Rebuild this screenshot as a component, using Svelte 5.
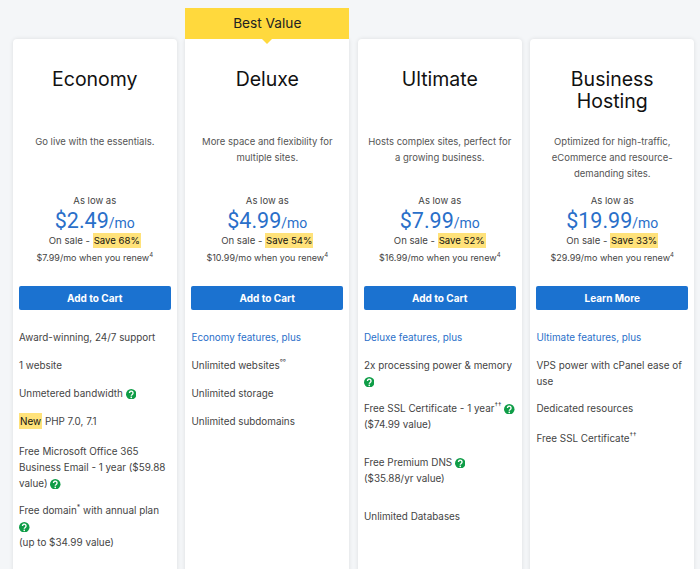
<script>
	const plans = [
		{
			name: ['Economy'],
			desc: ['Go live with the essentials.'],
			price: '$2.49',
			save: 'Save 68%',
			renew: '$7.99/mo',
			cta: 'Add to Cart',
			features: [
				{ parts: [{ t: 'Award-winning, 24/7 support' }] },
				{ parts: [{ t: '1 website' }] },
				{ parts: [{ t: 'Unmetered bandwidth ' }, { help: true }] },
				{ parts: [{ mark: 'New' }, { t: ' PHP 7.0, 7.1' }], cls: 'marked' },
				{ parts: [{ t: 'Free Microsoft Office 365 Business Email - 1 year ($59.88 value) ' }, { help: true }], cls: 'tight' },
				{ parts: [{ t: 'Free domain' }, { sup: '*' }, { t: ' with annual plan ' }, { help: true }, { br: true }, { t: '(up to $34.99 value)' }] }
			]
		},
		{
			name: ['Deluxe'],
			desc: ['More space and flexibility for', 'multiple sites.'],
			price: '$4.99',
			save: 'Save 54%',
			renew: '$10.99/mo',
			cta: 'Add to Cart',
			best: true,
			features: [
				{ parts: [{ t: 'Economy features, plus' }], cls: 'lead' },
				{ parts: [{ t: 'Unlimited websites' }, { sup: '°°' }] },
				{ parts: [{ t: 'Unlimited storage' }] },
				{ parts: [{ t: 'Unlimited subdomains' }] }
			]
		},
		{
			name: ['Ultimate'],
			desc: ['Hosts complex sites, perfect for', 'a growing business.'],
			price: '$7.99',
			save: 'Save 52%',
			renew: '$16.99/mo',
			cta: 'Add to Cart',
			features: [
				{ parts: [{ t: 'Deluxe features, plus' }], cls: 'lead' },
				{ parts: [{ t: '2x processing power & memory ' }, { help: true }], cls: 'tight' },
				{ parts: [{ t: 'Free SSL Certificate - 1 year' }, { sup: '††' }, { t: ' ' }, { help: true }, { br: true }, { t: '($74.99 value)' }], cls: 'loose' },
				{ parts: [{ t: 'Free Premium DNS ' }, { help: true }, { br: true }, { t: '($35.88/yr value)' }], cls: 'loose' },
				{ parts: [{ t: 'Unlimited Databases' }] }
			]
		},
		{
			name: ['Business', 'Hosting'],
			desc: ['Optimized for high-traffic,', 'eCommerce and resource-', 'demanding sites.'],
			price: '$19.99',
			save: 'Save 33%',
			renew: '$29.99/mo',
			cta: 'Learn More',
			features: [
				{ parts: [{ t: 'Ultimate features, plus' }], cls: 'lead' },
				{ parts: [{ t: 'VPS power with cPanel ease of use' }], cls: 'tight' },
				{ parts: [{ t: 'Dedicated resources' }], cls: 'marked' },
				{ parts: [{ t: 'Free SSL Certificate' }, { sup: '††' }] }
			]
		}
	];
</script>

<div class="page">
	<div class="plans">
		{#each plans as plan}
			<div class="card" class:best={plan.best}>
				{#if plan.best}
					<div class="ribbon">Best Value</div>
				{/if}
				<h2 class="name">
					{#each plan.name as line}
						<span>{line}</span>
					{/each}
				</h2>
				<div class="desc">
					{#each plan.desc as line}
						<span>{line}</span>
					{/each}
				</div>
				<div class="low">As low as</div>
				<div class="price">{plan.price}<small>/mo</small></div>
				<div class="sale">On sale - <mark>{plan.save}</mark></div>
				<div class="renew">{plan.renew} when you renew<sup>4</sup></div>
				<button class="cta">{plan.cta}</button>
				<ul class="features">
					{#each plan.features as feature}
						<li class={feature.cls}>
							{#each feature.parts as part}
								{#if part.t}
									{part.t}
								{:else if part.mark}
									<mark>{part.mark}</mark>
								{:else if part.sup}
									<sup>{part.sup}</sup>
								{:else if part.br}
									<br />
								{:else if part.help}
									<svg class="help" viewBox="0 0 20 20" aria-hidden="true">
										<circle cx="10" cy="10" r="10" fill="#0f9d47" />
										<path d="M6.6 7.6a3.4 3.4 0 1 1 5.3 2.8c-1.2.8-1.9 1.3-1.9 2.6" fill="none" stroke="#fff" stroke-width="2.6" />
										<circle cx="10" cy="15.8" r="1.6" fill="#fff" />
									</svg>
								{/if}
							{/each}
						</li>
					{/each}
				</ul>
			</div>
		{/each}
	</div>
</div>

<style>
	:global(body) {
		background: #f4f6f8;
	}

	.page {
		height: 569px;
		overflow: hidden;
		font-family: Inter, 'Noto Sans', sans-serif;
		color: #444;
		background: #f4f6f8;
	}

	.plans {
		display: grid;
		grid-template-columns: repeat(4, 163.6px);
		column-gap: 8.9px;
		padding: 39px 0 0 13px;
	}

	.card {
		position: relative;
		height: 560px;
		background: #fff;
		border-radius: 4px;
		box-shadow: 0 0 4px rgba(0, 0, 0, 0.1);
		padding: 29px 6px 0;
		box-sizing: border-box;
		text-align: center;
	}

	.best {
		border-radius: 0;
	}

	.ribbon {
		position: absolute;
		top: -31px;
		left: 0;
		right: 0;
		height: 31px;
		line-height: 31px;
		background: #ffd93d;
		color: #222;
		font-size: 13.7px;
	}

	.ribbon::after {
		content: '';
		position: absolute;
		left: 50%;
		top: 100%;
		margin-left: -5px;
		border: 5px solid transparent;
		border-top-color: #ffd93d;
		border-bottom: 0;
	}

	.name {
		margin: 0;
		height: 66px;
		font-size: 19.5px;
		line-height: 22px;
		font-weight: 400;
		color: #111;
	}

	.name span,
	.desc span {
		display: block;
	}

	.desc {
		height: 60px;
		font-size: 9.5px;
		line-height: 16px;
		color: #555;
		white-space: nowrap;
	}

	.low {
		font-size: 9.5px;
		line-height: 14px;
		color: #444;
	}

	.price {
		margin-top: 3px;
		font-family: Roboto, sans-serif;
		font-size: 21.5px;
		line-height: 20px;
		color: #2a6fc9;
		white-space: nowrap;
	}

	.price small {
		font-size: 14px;
	}

	.sale {
		margin-top: -1px;
		font-size: 9.6px;
		line-height: 17px;
		color: #444;
		white-space: nowrap;
	}

	mark {
		background: #ffe27a;
		color: #111;
		padding: 2px 1px;
	}

	.renew {
		margin-top: 1px;
		font-size: 9px;
		line-height: 16px;
		color: #444;
		white-space: nowrap;
	}

	sup {
		font-size: 7px;
		line-height: 0;
	}

	.renew sup {
		font-size: 6px;
	}

	.cta {
		display: block;
		width: 100%;
		height: 24px;
		margin-top: 20px;
		padding: 0;
		border: 0;
		border-radius: 2px;
		background: #1b72d0;
		color: #fff;
		font-family: inherit;
		font-size: 10px;
		font-weight: 700;
	}

	.features {
		list-style: none;
		margin: 19px 0 0;
		padding: 0;
		text-align: left;
		font-size: 9.9px;
		line-height: 16px;
		color: #444;
	}

	.features li {
		margin-bottom: 12px;
	}

	.features li.tight {
		margin-bottom: 11px;
	}

	.features li.marked {
		margin-bottom: 14px;
	}

	.features li.loose {
		margin-bottom: 22px;
		white-space: nowrap;
	}

	.features li.lead {
		color: #2a6fc9;
	}

	.help {
		width: 10.5px;
		height: 10.5px;
		vertical-align: -2px;
	}
</style>
